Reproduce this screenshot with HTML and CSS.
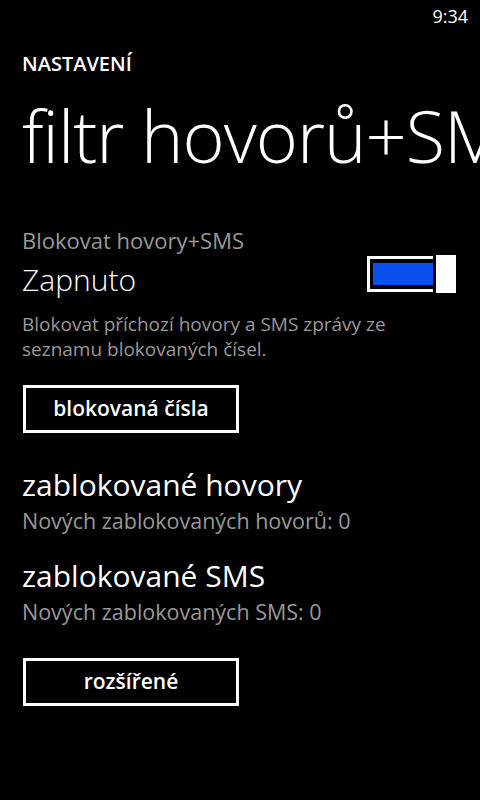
FILE: index.html
```html
<!DOCTYPE html>
<html lang="cs">
<head>
  <meta charset="UTF-8">
  <title>filtr hovorů+SMS</title>
  <meta name="viewport" content="width=device-width, initial-scale=1">
  <link rel="stylesheet" href="styles.css">
</head>
<body>
  <div class="status-bar">
    <span class="clock">9:34</span>
  </div>

  <div class="page">
    <div class="app-title">NASTAVENÍ</div>
    <!-- page title is wider than the screen, it gets clipped like on the phone -->
    <h1 class="page-title">filtr hovorů+SMS</h1>

    <div class="toggle-row">
      <div class="toggle-labels">
        <div class="toggle-header">Blokovat hovory+SMS</div>
        <div class="toggle-state">Zapnuto</div>
      </div>
      <div class="toggle-switch">
        <div class="toggle-track"><div class="toggle-fill"></div></div>
        <div class="toggle-thumb"></div>
      </div>
    </div>

    <p class="description">Blokovat příchozí hovory a SMS zprávy ze seznamu blokovaných čísel.</p>

    <button class="wp-btn first-btn">blokovaná čísla</button>

    <div class="stat-item first-stat">
      <div class="stat-title">zablokované hovory</div>
      <div class="stat-sub">Nových zablokovaných hovorů: 0</div>
    </div>

    <div class="stat-item">
      <div class="stat-title">zablokované SMS</div>
      <div class="stat-sub">Nových zablokovaných SMS: 0</div>
    </div>

    <button class="wp-btn last-btn">rozšířené</button>
  </div>
</body>
</html>
```

FILE: styles.css
```css
html, body {
  background: #000;
}
body {
  margin: 0;
  color: #fff;
  font-family: 'Open Sans', 'Noto Sans', Arial, sans-serif;
  overflow: hidden;
}
.status-bar {
  height: 32px;
  display: flex;
  justify-content: flex-end;
  align-items: center;
  padding-right: 12px;
}
.clock {
  font-size: 18px;
  line-height: 32px;
  color: #fff;
}
.page {
  padding-left: 22px;
  padding-right: 24px;
  white-space: nowrap;
}
.app-title {
  margin-top: 18px;
  font-size: 20px;
  line-height: 28px;
  font-weight: 600;
}
.page-title {
  margin: 17px -24px 0 0;
  font-size: 72px;
  line-height: 80px;
  font-weight: 300;
  letter-spacing: -1px;
  overflow: hidden;
}
.toggle-row {
  margin-top: 52px;
  display: flex;
  justify-content: space-between;
  align-items: flex-start;
}
.toggle-header {
  font-size: 22px;
  line-height: 26px;
  color: #999;
}
.toggle-state {
  margin-top: 9px;
  font-size: 30px;
  line-height: 36px;
  font-weight: 300;
}
.toggle-switch {
  margin-top: 28px;
  display: flex;
  align-items: center;
  gap: 3px;
}
.toggle-track {
  width: 66px;
  height: 36px;
  border: 3px solid #fff;
  border-right: none;
  padding: 4px 0 4px 3px;
  box-sizing: border-box;
  display: flex;
}
.toggle-fill {
  flex: 1;
  background: #0a50ef;
}
.toggle-thumb {
  width: 20px;
  height: 38px;
  background: #fff;
}
.description {
  margin: 14px 0 0 0;
  font-size: 19px;
  line-height: 25px;
  color: #999;
  white-space: normal;
}
.wp-btn {
  display: block;
  width: 216px;
  height: 48px;
  margin-left: 1px;
  border: 3px solid #fff;
  background: #000;
  color: #fff;
  font-family: 'Open Sans', 'Noto Sans', Arial, sans-serif;
  font-size: 21px;
  font-weight: 600;
  padding: 0 0 3px 0;
  cursor: pointer;
}
.first-btn {
  margin-top: 23px;
}
.first-stat {
  margin-top: 32px;
}
.stat-item + .stat-item {
  margin-top: 18px;
}
.stat-title {
  font-size: 30px;
  line-height: 39px;
  font-weight: 400;
}
.stat-sub {
  font-size: 21.5px;
  line-height: 34px;
  color: #999;
}
.last-btn {
  margin-top: 29px;
}
```
